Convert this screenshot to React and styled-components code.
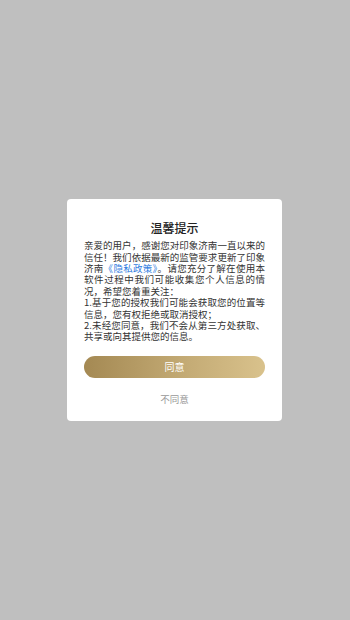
import styled, { createGlobalStyle } from "styled-components";

const GlobalStyle = createGlobalStyle`
  html, body {
    margin: 0;
    padding: 0;
    background: #bfbfbf;
  }
  * { box-sizing: border-box; }
`;

const Overlay = styled.div`
  width: 350px;
  height: 620px;
  padding-right: 1px;
  display: flex;
  align-items: center;
  justify-content: center;
  background: #bfbfbf;
  font-family: "Noto Sans CJK SC", "Noto Sans", sans-serif;
`;

const Dialog = styled.div`
  width: 215px;
  background: #ffffff;
  border-radius: 4px;
  padding: 21px 17px 14px;
  display: flex;
  flex-direction: column;
`;

const Title = styled.h2`
  margin: 0 0 4px;
  font-size: 12px;
  line-height: 16px;
  font-weight: 500;
  color: #222;
  text-align: center;
`;

const Body = styled.p`
  margin: 0;
  font-size: 9.5px;
  line-height: 11.4px;
  color: #333;
  text-align: justify;
`;

const Link = styled.span`
  color: #2f7ce0;
`;

const AgreeButton = styled.button`
  margin-top: 13px;
  height: 22px;
  width: 100%;
  border: none;
  border-radius: 11px;
  background: linear-gradient(90deg, #a48953 0%, #c3aa74 55%, #d9c28c 100%);
  color: #fff;
  font-family: inherit;
  font-size: 10px;
  cursor: pointer;
`;

const RefuseButton = styled.button`
  margin-top: 13px;
  height: 16px;
  background: none;
  border: none;
  padding: 0;
  color: #999;
  font-family: inherit;
  font-size: 9.5px;
  line-height: 16px;
  cursor: pointer;
`;

export default function App() {
  return (
    <>
      <GlobalStyle />
      <Overlay>
        <Dialog>
          <Title>温馨提示</Title>
          <Body>
            亲爱的用户，感谢您对印象济南一直以来的信任！我们依据最新的监管要求更新了印象济南<Link>《隐私政策》</Link>。请您充分了解在使用本软件过程中我们可能收集您个人信息的情况，希望您着重关注：
            <br />
            1.基于您的授权我们可能会获取您的位置等信息，您有权拒绝或取消授权；
            <br />
            2.未经您同意，我们不会从第三方处获取、共享或向其提供您的信息。
          </Body>
          <AgreeButton>同意</AgreeButton>
          <RefuseButton>不同意</RefuseButton>
        </Dialog>
      </Overlay>
    </>
  );
}
